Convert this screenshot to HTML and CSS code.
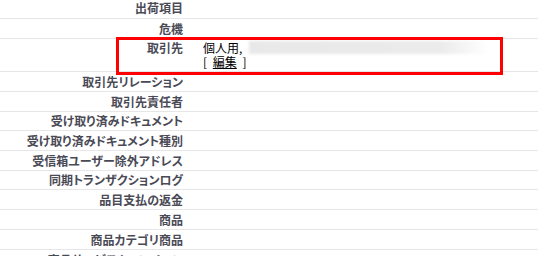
FILE: index.html
```html
<!DOCTYPE html>
<html lang="ja">
<head>
  <meta charset="UTF-8" />
  <title>ページレイアウト</title>
  <link rel="stylesheet" href="styles.css">
</head>
<body>
  <table class="detail">
    <colgroup><col class="label-col"><col></colgroup>
    <tr><td class="label">出荷項目</td><td class="value"></td></tr>
    <tr><td class="label">危機</td><td class="value"></td></tr>
    <tr class="tall">
      <td class="label">取引先</td>
      <td class="value">個人用,<span class="redact"></span><br><span class="edit">[ <a href="#">編集</a> ]</span></td>
    </tr>
    <tr><td class="label">取引先リレーション</td><td class="value"></td></tr>
    <tr><td class="label">取引先責任者</td><td class="value"></td></tr>
    <tr class="short"><td class="label">受け取り済みドキュメント</td><td class="value"></td></tr>
    <tr><td class="label">受け取り済みドキュメント種別</td><td class="value"></td></tr>
    <tr><td class="label">受信箱ユーザー除外アドレス</td><td class="value"></td></tr>
    <tr class="short"><td class="label">同期トランザクションログ</td><td class="value"></td></tr>
    <tr><td class="label">品目支払の返金</td><td class="value"></td></tr>
    <tr><td class="label">商品</td><td class="value"></td></tr>
    <tr><td class="label">商品カテゴリ商品</td><td class="value"></td></tr>
    <tr><td class="label">商品サービスキャンペーン</td><td class="value"></td></tr>
  </table>
  <div class="highlight"></div>
</body>
</html>
```

FILE: styles.css
```css
* { box-sizing: border-box; }
body {
  margin: 0;
  background: #fff;
  font-family: "Noto Sans CJK JP", "Noto Sans", sans-serif;
  font-size: 12px;
  overflow: hidden;
  position: relative;
  height: 256px;
}
.detail {
  width: 100%;
  border-collapse: collapse;
  table-layout: fixed;
  margin-top: -2px;
}
.label-col { width: 193px; }
.detail tr { border-bottom: 1px solid #e6e6e9; }
.detail td {
  height: 20px;
  line-height: 14px;
  padding: 3px 0 2px 0;
  vertical-align: top;
  white-space: nowrap;
}
.detail .short td {
  height: 19px;
  padding-top: 2px;
}
.label {
  text-align: right;
  padding-right: 10px !important;
  font-weight: bold;
  color: #4a4a56;
  font-feature-settings: "palt";
}
.value {
  padding-left: 10px !important;
  color: #000;
}
.tall td {
  height: 33px;
  padding-top: 2px;
}
.edit {
  word-spacing: 3px;
}
.value a {
  color: #000;
  text-decoration: underline;
}
.redact {
  display: inline-block;
  vertical-align: top;
  width: 240px;
  height: 13px;
  margin-left: 7px;
  background: linear-gradient(to right, #e8e8e8 0%, #ebebeb 80%, #fff 100%);
  filter: blur(1.5px);
}
.highlight {
  position: absolute;
  left: 116px;
  top: 37px;
  width: 387px;
  height: 38px;
  border: 3px solid #f00;
}
```
